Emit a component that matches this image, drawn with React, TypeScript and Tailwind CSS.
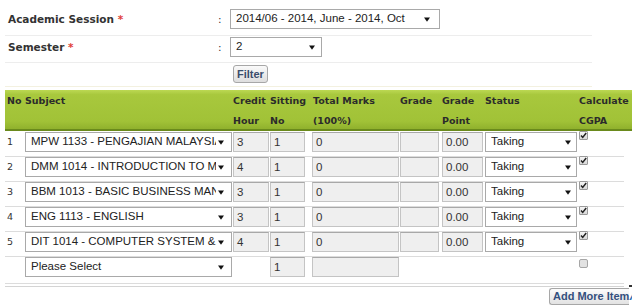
import React from "react"

const rows = [
  { no: "1", subject: "MPW 1133 - PENGAJIAN MALAYSIA 3", credit: "3" },
  { no: "2", subject: "DMM 1014 - INTRODUCTION TO MULTIMEDIA", credit: "4" },
  { no: "3", subject: "BBM 1013 - BASIC BUSINESS MANAGEMENT", credit: "3" },
  { no: "4", subject: "ENG 1113 - ENGLISH", credit: "3" },
  { no: "5", subject: "DIT 1014 - COMPUTER SYSTEM & ARCHITECTURE", credit: "4" },
]

const cols = "grid grid-cols-[20px_208px_37px_42px_88px_42px_43px_94px_1fr]"

function Arrow() {
  return (
    <svg width="6" height="5" viewBox="0 0 6 5" className="shrink-0">
      <path d="M0 0.5h6L3 4.8z" fill="#111" />
    </svg>
  )
}

function Select({ text, className }: { text: string; className: string }) {
  return (
    <div
      className={`flex h-[20px] items-center overflow-hidden border border-[#a9a9a9] bg-white pl-[5px] font-['Liberation_Sans',Arial,sans-serif] text-[11.5px] text-[#222] ${className}`}
    >
      <span className="min-w-0 flex-1 overflow-hidden whitespace-nowrap">{text}</span>
      <span className="ml-[2px]">
        <Arrow />
      </span>
    </div>
  )
}

function Field({ value, className }: { value: string; className: string }) {
  return (
    <div
      className={`h-[20px] border border-[#c4c4c4] border-t-[#a8a8a8] bg-[#efefef] pl-[3px] font-['Liberation_Sans',Arial,sans-serif] text-[11.5px] leading-[18px] text-[#333] ${className}`}
    >
      {value}
    </div>
  )
}

function Check({ checked }: { checked: boolean }) {
  if (!checked) {
    return <div className="mt-[2px] h-[9px] w-[9px] rounded-[2px] border border-[#a6a6a6] bg-[#e2e2e2]" />
  }
  return (
    <div className="mt-[-1px] flex h-[9px] w-[9px] items-center justify-center rounded-[1px] border border-[#9a9a9a] bg-[linear-gradient(#f6f6f6,#d8d8d8)]">
      <svg width="7" height="7" viewBox="0 0 7 7">
        <path d="M1 3.6L2.7 5.4L6.2 1" fill="none" stroke="#222" strokeWidth="1.5" />
      </svg>
    </div>
  )
}

export default function App() {
  return (
    <div className="relative h-[308px] w-[632px] overflow-hidden bg-white font-['DejaVu_Sans',Verdana,sans-serif] text-[#333]">
      {/* session filter */}
      <div className="ml-[5px] w-[587px]">
        <div className="flex h-[36px] items-start border-b border-[#ededed] pt-[9px]">
          <div className="w-[213px] pl-[3px] text-[10.5px] font-bold leading-[20px]">
            Academic Session <span className="text-[#e0403a]">*</span>
          </div>
          <div className="w-[12px] text-[10.5px] leading-[20px]">:</div>
          <Select text="2014/06 - 2014, June - 2014, Oct" className="w-[210px] pr-[9px]" />
        </div>
        <div className="flex h-[27px] items-start border-b border-[#ededed] pt-[1px]">
          <div className="w-[213px] pl-[3px] text-[10.5px] font-bold leading-[20px]">
            Semester <span className="text-[#e0403a]">*</span>
          </div>
          <div className="w-[12px] text-[10.5px] leading-[20px]">:</div>
          <Select text="2" className="w-[92px] pr-[6px]" />
        </div>
        <div className="flex h-[24px] items-start border-b border-[#f3f1e0] pl-[228px] pt-[2px]">
          <button className="h-[18px] rounded-[3px] border border-[#a7a7a7] bg-[linear-gradient(#fafafa,#dedede)] px-[3px] font-['Liberation_Sans',Arial,sans-serif] text-[11px] font-bold leading-[16px] text-[#3a4d6b]">
            Filter
          </button>
        </div>
      </div>

      {/* table header */}
      <div
        className={`${cols} mt-[3px] ml-[5px] h-[41px] w-[627px] border-b-2 border-[#6a8a1c] bg-[linear-gradient(#bcd853,#a8c83d_12%,#a1c237_80%,#90b12d)] pt-[1px] text-[9.5px] font-bold leading-[20px] text-[#2b2b2b]`}
      >
        <div className="pl-[2px]">No</div>
        <div>Subject</div>
        <div>Credit<br />Hour</div>
        <div>Sitting<br />No</div>
        <div className="pl-[1px]">Total Marks<br />(100%)</div>
        <div>Grade</div>
        <div>Grade<br />Point</div>
        <div>Status</div>
        <div className="whitespace-nowrap">Calculate<br />CGPA</div>
      </div>

      {/* subject rows */}
      <div className="ml-[5px] w-[619px]">
        {rows.map((r, i) => (
          <div
            key={r.no}
            className={`${cols} h-[25px] items-start ${i === 0 ? "pt-[1px]" : "border-t border-[#dcdcdc]"}`}
          >
            <div className="pl-[2px] text-[9.5px] leading-[20px]">{r.no}</div>
            <Select text={r.subject} className="w-[207px] pr-[7px]" />
            <Field value={r.credit} className="w-[36px]" />
            <Field value="1" className="w-[35px]" />
            <Field value="0" className="w-[87px]" />
            <Field value="" className="w-[39px]" />
            <Field value="0.00" className="w-[41px]" />
            <Select text="Taking" className="w-[92px] pr-[5px]" />
            <Check checked />
          </div>
        ))}
        <div className={`${cols} h-[28px] items-start border-y border-[#dcdcdc]`}>
          <div />
          <Select text="Please Select" className="w-[207px] pr-[7px]" />
          <div />
          <Field value="1" className="w-[35px]" />
          <Field value="" className="w-[87px]" />
          <div />
          <div />
          <div />
          <Check checked={false} />
        </div>
        <div className="h-[3px] border-b border-[#d4d4d4]" />
      </div>

      {/* add button */}
      <div className="mt-[1px] flex items-start pl-[549px]">
        <button className="h-[17px] shrink-0 whitespace-nowrap rounded-l-[3px] border border-r-0 border-[#a7a7a7] bg-[linear-gradient(#fcfcfc,#e2e2e2)] pl-[3px] font-['Liberation_Sans',Arial,sans-serif] text-[11px] font-bold leading-[15px] text-[#34507e]">
          Add More Item
        </button>
        <div className="mt-[-3px] shrink-0 border-t-[2px] border-[#333] font-['Liberation_Sans',Arial,sans-serif] text-[13px] font-bold italic leading-[18px] text-[#2f73b8]">
          A
        </div>
      </div>
    </div>
  )
}
